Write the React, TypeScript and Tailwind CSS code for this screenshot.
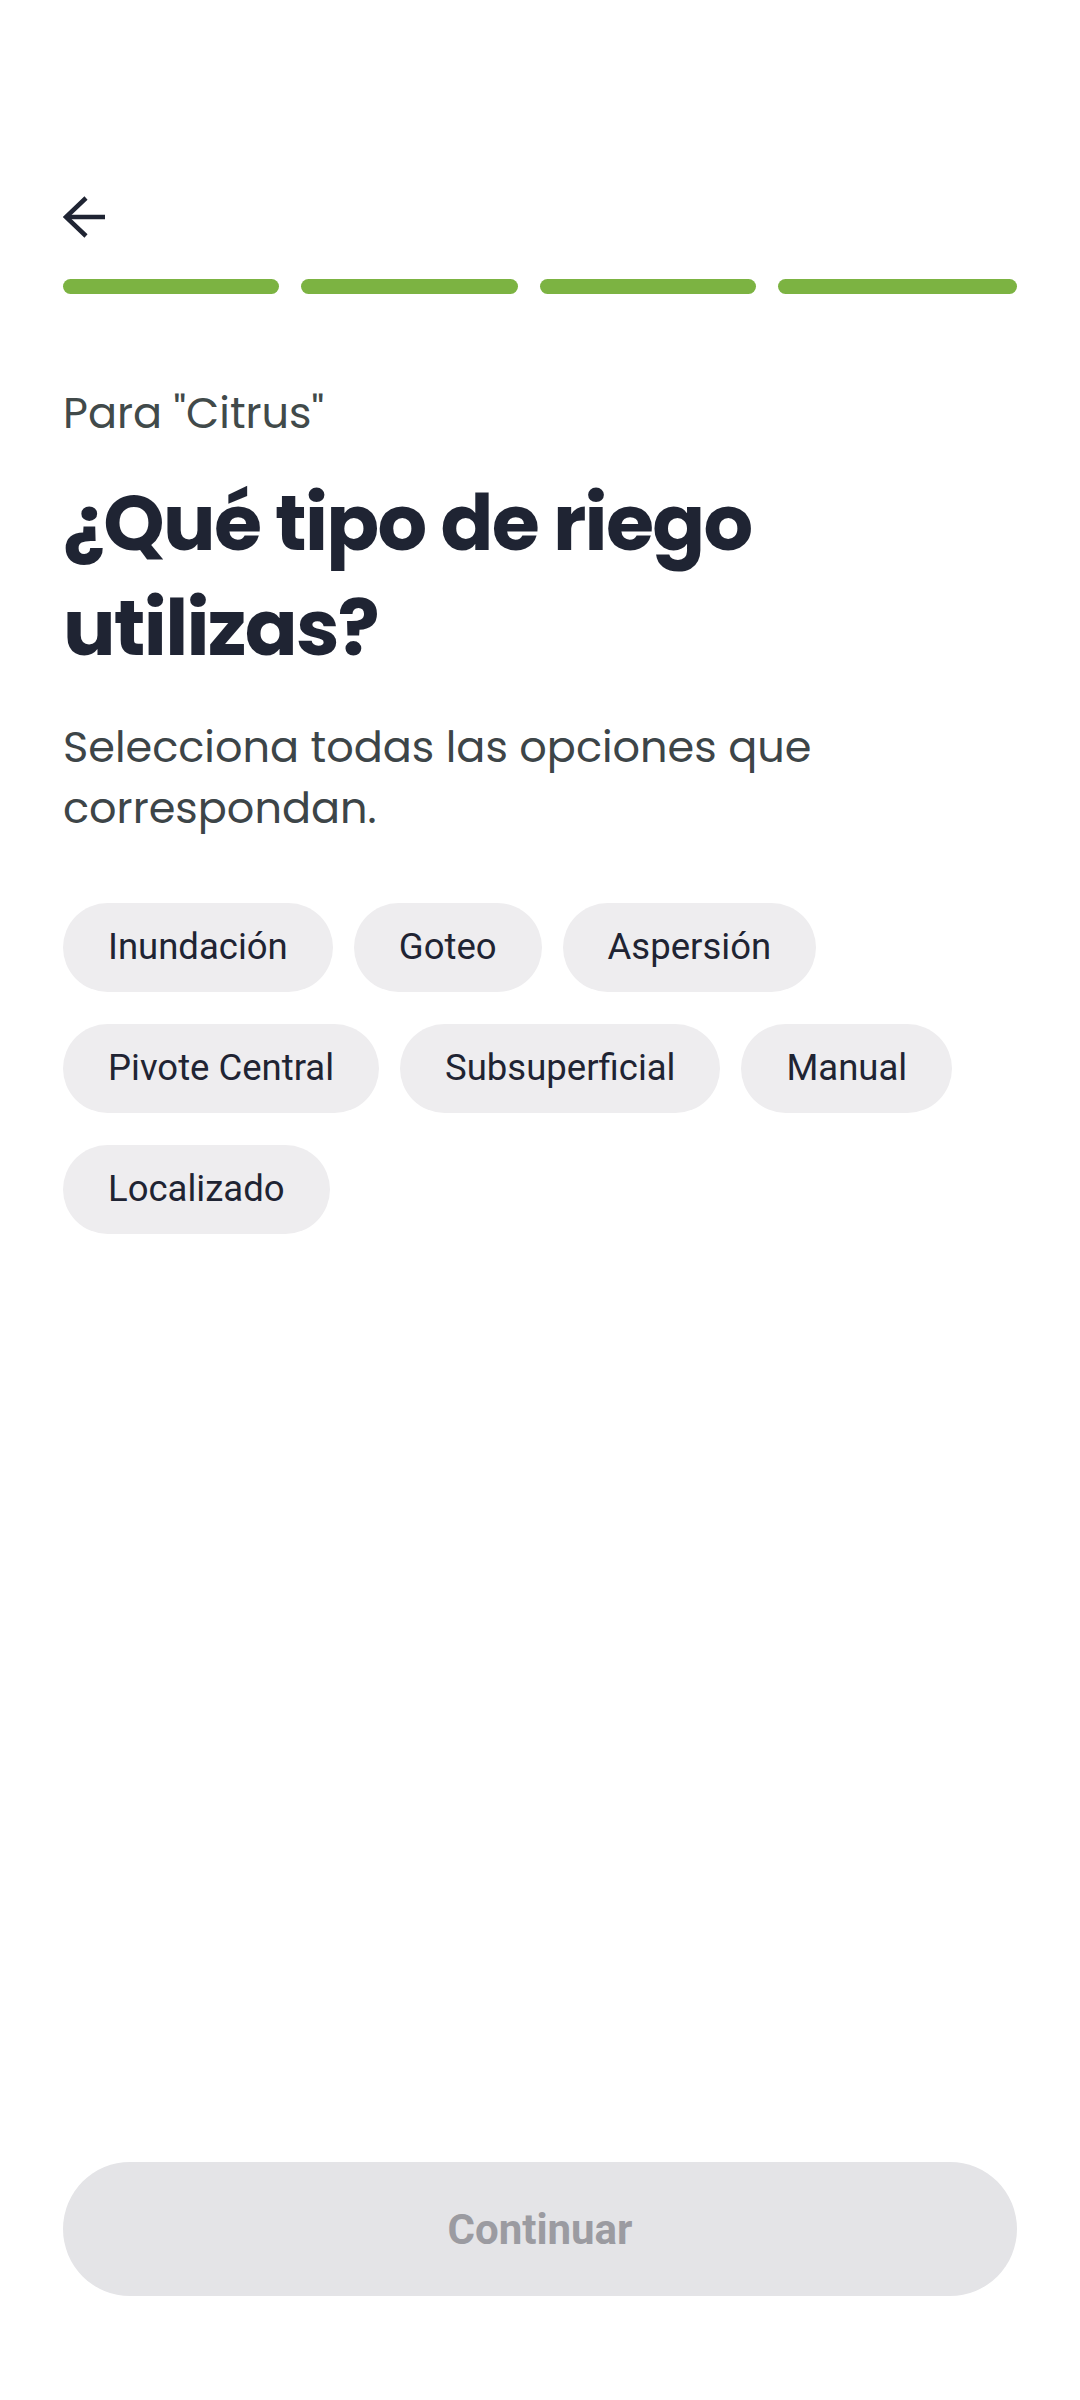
import React from 'react';

const rows = [
  ['Inundación', 'Goteo', 'Aspersión'],
  ['Pivote Central', 'Subsuperficial', 'Manual'],
  ['Localizado'],
];

const display = { fontFamily: 'Poppins, Inter, "Noto Sans", sans-serif' };
const body = { fontFamily: 'Roboto, "Noto Sans", sans-serif' };

export default function App() {
  return (
    <div className="w-[1080px] h-[2400px] bg-white flex flex-col px-[63px]">
      {/* Header */}
      <div className="pt-[196px]">
        <button className="block w-[42px] h-[42px] text-[#1f2433]" aria-label="Volver">
          <svg width="42" height="42" viewBox="0 0 42 42" fill="none" stroke="currentColor" strokeWidth="4.5">
            <path d="M42 21H3" />
            <path d="M23 2L3 21l20 19" />
          </svg>
        </button>
      </div>

      {/* Progress */}
      <div className="mt-[41px] flex gap-[22px]">
        <div className="flex-1 h-[15px] rounded-full bg-[#7cb342]" />
        <div className="flex-1 h-[15px] rounded-full bg-[#7cb342]" />
        <div className="flex-1 h-[15px] rounded-full bg-[#7cb342]" />
        <div className="w-[239px] h-[15px] rounded-full bg-[#7cb342]" />
      </div>

      {/* Question */}
      <p className="mt-[89px] text-[43px] leading-[60px] text-[#414a4a]" style={display}>
        Para "Citrus"
      </p>
      <h1
        className="mt-[27px] text-[78px] leading-[105px] font-bold tracking-[-1.7px] text-[#1f2433]"
        style={display}
      >
        ¿Qué tipo de riego
        <br />
        utilizas?
      </h1>
      <p className="mt-[37px] text-[43px] leading-[61px] text-[#3d4548]" style={display}>
        Selecciona todas las opciones que
        <br />
        correspondan.
      </p>

      {/* Options */}
      <div className="mt-[64px] flex flex-col gap-[32px]" style={body}>
        {rows.map((row, i) => (
          <div key={i} className="flex gap-[21px]">
            {row.map((label) => (
              <button
                key={label}
                className="h-[89px] px-[45px] rounded-full bg-[#eeedef] text-[36.5px] text-[#1f2433]"
              >
                {label}
              </button>
            ))}
          </div>
        ))}
      </div>

      {/* Footer */}
      <div className="mt-auto mb-[104px]">
        <button
          disabled
          className="w-full h-[134px] rounded-full bg-[#e4e4e7] text-[42px] font-bold text-[#9b9ba1]"
          style={body}
        >
          Continuar
        </button>
      </div>
    </div>
  );
}
